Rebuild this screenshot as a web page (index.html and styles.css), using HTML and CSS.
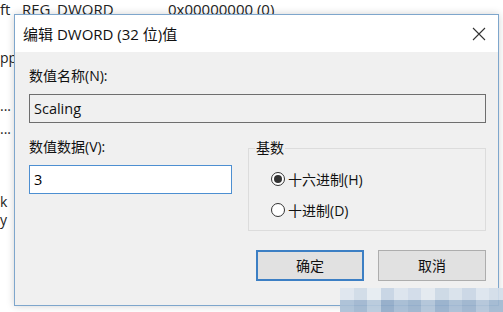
FILE: index.html
```html
<!DOCTYPE html>
<html>
<head>
<meta charset="utf-8">
<link rel="stylesheet" href="styles.css">
</head>
<body>
<div class="desktop">
  <div class="bg-row">
    <span class="bg-a">ft</span><span class="bg-b">REG_DWORD</span><span class="bg-c">0x00000000 (0)</span>
  </div>
  <div class="bg-side">
    <span class="s1">pp</span>
    <span class="s2">...</span>
    <span class="s3">...</span>
    <span class="s4">k</span>
    <span class="s5">y</span>
  </div>

  <div class="dialog">
    <div class="titlebar">
      <span class="title">编辑 DWORD (32 位)值</span>
      <svg class="close" width="14" height="14" viewBox="0 0 14 14"><path d="M1 1 L13 13 M13 1 L1 13" stroke="#333" stroke-width="1.1" fill="none"/></svg>
    </div>
    <div class="body">
      <div class="label l-name">数值名称(N):</div>
      <div class="field readonly">Scaling</div>
      <div class="mid">
        <div class="col-left">
          <div class="label">数值数据(V):</div>
          <div class="field active">3</div>
        </div>
        <fieldset class="group">
          <legend>基数</legend>
          <div class="radio"><span class="dot on"></span>十六进制(H)</div>
          <div class="radio"><span class="dot"></span>十进制(D)</div>
        </fieldset>
      </div>
      <div class="buttons">
        <div class="btn default">确定</div>
        <div class="btn">取消</div>
      </div>
    </div>
  </div>

  <div class="mosaic">
    <span style="background:#dfe7ef"></span><span style="background:#cfdbe8"></span><span style="background:#e7edf3"></span><span style="background:#c5d4e4"></span><span style="background:#dbe4ee"></span><span style="background:#d0dcea"></span><span style="background:#e3eaf1"></span><span style="background:#cbd8e6"></span><span style="background:#d8e2ec"></span><span style="background:#c9d6e5"></span><span style="background:#dde6ef"></span><span style="background:#d3deea"></span>
    <span style="background:#a9bfd6"></span><span style="background:#9db5cf"></span><span style="background:#b6c9dc"></span><span style="background:#8faac8"></span><span style="background:#a3bad3"></span><span style="background:#98b1cc"></span><span style="background:#afc3d8"></span><span style="background:#94aecb"></span><span style="background:#a6bcd4"></span><span style="background:#9ab2cd"></span><span style="background:#b1c4d9"></span><span style="background:#9fb7d0"></span>
  </div>
</div>
</body>
</html>
```

FILE: styles.css
```css
html, body {
  margin: 0;
  padding: 0;
  background: #ffffff;
}
.desktop {
  position: relative;
  width: 503px;
  height: 312px;
  overflow: hidden;
  font-family: "Open Sans", "Noto Sans CJK SC", sans-serif;
  color: #000;
  background: #fff;
}
.bg-row {
  display: flex;
  height: 18px;
  font-size: 15px;
  line-height: 18px;
  color: #222;
  margin-top: 0;
}
.bg-a { width: 22px; }
.bg-b { width: 146px; }
.bg-side {
  position: absolute;
  left: 0;
  top: 40px;
  width: 14px;
  font-size: 14px;
  color: #222;
}
.bg-side span { position: absolute; left: 0; }
.s1 { top: 8px; }
.s2 { top: 56px; }
.s3 { top: 79px; }
.s4 { top: 152px; }
.s5 { top: 170px; }

.dialog {
  position: absolute;
  left: 14px;
  top: 14px;
  width: 483px;
  height: 290px;
  border: 1px solid #7ea6cc;
  background: #f0f0f0;
  box-shadow: 0 0 8px rgba(0,0,0,0.18);
  display: flex;
  flex-direction: column;
}
.titlebar {
  height: 37px;
  background: #fff;
  display: flex;
  align-items: center;
  justify-content: space-between;
  padding: 0 12px 0 8px;
}
.title {
  font-size: 15px;
  color: #111;
}
.close { display: block; }
.body {
  padding: 0 12px 0 14px;
  display: flex;
  flex-direction: column;
}
.label {
  font-size: 14px;
  line-height: 18px;
  color: #111;
}
.l-name { margin-top: 15px; }
.field {
  box-sizing: border-box;
  height: 29px;
  margin-top: 9px;
  font-size: 14.5px;
  line-height: 27px;
  padding-left: 4px;
}
.readonly {
  border: 1px solid #6e6e6e;
  background: #f0f0f0;
  color: #111;
}
.active {
  border: 1px solid #4d8fd1;
  background: #fff;
  width: 203px;
}
.mid {
  display: flex;
  justify-content: space-between;
  margin-top: 15px;
}
.col-left { display: flex; flex-direction: column; }
.group {
  box-sizing: border-box;
  width: 238px;
  height: 92px;
  margin: 1px 0 0 0;
  padding: 6px 0 0 22px;
  border: 1px solid #dcdcdc;
  border-radius: 0;
}
.group legend {
  font-size: 14px;
  padding: 0 1px;
  margin-left: -16px;
  color: #111;
  line-height: 18px;
}
.radio {
  display: flex;
  align-items: center;
  height: 31px;
  font-size: 14px;
  color: #111;
}
.dot {
  box-sizing: border-box;
  width: 14px;
  height: 14px;
  border: 1px solid #333;
  border-radius: 50%;
  margin-right: 3px;
  background: #fff;
  display: flex;
  align-items: center;
  justify-content: center;
}
.dot.on::after {
  content: "";
  width: 8px;
  height: 8px;
  border-radius: 50%;
  background: #333;
}
.buttons {
  display: flex;
  justify-content: flex-end;
  gap: 14px;
  margin-top: 19px;
}
.btn {
  box-sizing: border-box;
  width: 108px;
  height: 31px;
  border: 1px solid #adadad;
  background: #e1e1e1;
  font-size: 14px;
  line-height: 29px;
  text-align: center;
  color: #111;
}
.btn.default {
  border: 2px solid #3c7fc4;
  line-height: 27px;
}
.mosaic {
  position: absolute;
  left: 340px;
  top: 288px;
  width: 163px;
  height: 24px;
  display: grid;
  grid-template-columns: repeat(12, 1fr);
  grid-template-rows: 12px 12px;
  opacity: 0.9;
}
```
